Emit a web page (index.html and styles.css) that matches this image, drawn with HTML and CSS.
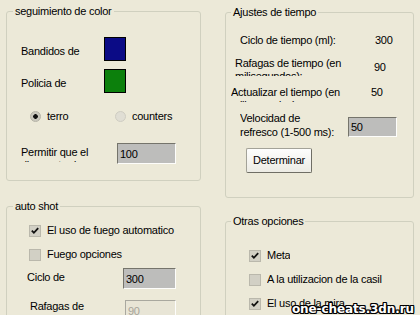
FILE: index.html
```html
<!DOCTYPE html>
<html lang="es">
<head>
  <meta charset="UTF-8" />
  <title>Opciones</title>
  <link rel="stylesheet" href="styles.css">
</head>
<body>
  <div class="col col-left">
    <fieldset class="group group-color">
      <legend>seguimiento de color</legend>
      <div class="swatch-row first">
        <span class="swatch-label">Bandidos de color</span>
        <span class="swatch blue"></span>
      </div>
      <div class="swatch-row">
        <span class="swatch-label">Policia de color</span>
        <span class="swatch green"></span>
      </div>
      <div class="radio-row">
        <label class="option"><span class="radio on"></span>terro</label>
        <label class="option"><span class="radio off"></span>counters</label>
      </div>
      <div class="field-row permit">
        <span class="field-label">Permitir que el disparo tarde:</span>
        <input class="field" type="text" value="100" readonly>
      </div>
    </fieldset>

    <fieldset class="group group-shot">
      <legend>auto shot</legend>
      <div class="check-row first">
        <span class="check on"><svg viewBox="0 0 12 12" width="12" height="12"><path d="M2.8 5.6l2.1 2.2 4.3-4.7" /></svg></span>
        El uso de fuego automatico
      </div>
      <div class="check-row">
        <span class="check"></span>
        Fuego opciones
      </div>
      <div class="field-row cycle">
        <span class="field-label">Ciclo de disparo:</span>
        <input class="field" type="text" value="300" readonly>
      </div>
      <div class="field-row burst">
        <span class="field-label">Rafagas de velocidad (ms):</span>
        <input class="field disabled" type="text" value="90" disabled>
      </div>
    </fieldset>
  </div>

  <div class="col col-right">
    <fieldset class="group group-time">
      <legend>Ajustes de tiempo</legend>
      <div class="trow t-cycle">
        <span class="tlabel">Ciclo de tiempo (ml):</span>
        <span class="tvalue">300</span>
      </div>
      <div class="trow t-burst">
        <span class="tlabel">Rafagas de tiempo (en milisegundos):</span>
        <span class="tvalue">90</span>
      </div>
      <div class="trow t-update">
        <span class="tlabel">Actualizar el tiempo (en milisegundos):</span>
        <span class="tvalue">50</span>
      </div>
      <div class="trow t-refresh">
        <span class="tlabel">Velocidad de<br>refresco (1-500 ms):</span>
        <input class="field" type="text" value="50" readonly>
      </div>
      <button class="btn" type="button">Determinar</button>
    </fieldset>

    <fieldset class="group group-other">
      <legend>Otras opciones</legend>
      <div class="check-row first">
        <span class="check on"><svg viewBox="0 0 12 12" width="12" height="12"><path d="M2.8 5.6l2.1 2.2 4.3-4.7" /></svg></span>
        <span class="check-text">Meta</span>
      </div>
      <div class="check-row">
        <span class="check"></span>
        <span class="check-text">A la utilizacion de la casilla</span>
      </div>
      <div class="check-row">
        <span class="check on"><svg viewBox="0 0 12 12" width="12" height="12"><path d="M2.8 5.6l2.1 2.2 4.3-4.7" /></svg></span>
        <span class="check-text">El uso de la mira</span>
      </div>
    </fieldset>
  </div>

  <div class="watermark">one-cheats.3dn.ru</div>
</body>
</html>
```

FILE: styles.css
```css
html {
  background: #ece9d8;
}

body {
  margin: 0;
  width: 420px;
  height: 315px;
  box-sizing: border-box;
  padding-left: 6px;
  overflow: hidden;
  position: relative;
  display: flex;
  gap: 24px;
  background: #ece9d8;
  color: #000;
  font-family: "Liberation Sans", Arial, sans-serif;
  font-size: 11px;
  line-height: 13px;
  letter-spacing: -0.25px;
}

.col {
  display: flex;
  flex-direction: column;
}

.col-left {
  width: 195px;
  padding-top: 4px;
}

.col-right {
  width: 189px;
  padding-top: 5px;
}

/* group boxes */
.group {
  flex-shrink: 0;
  margin: 0;
  padding: 0;
  min-width: 0;
  border: 1px solid #d0d0bf;
  border-radius: 3px;
}

.group legend {
  margin-left: 6px;
  padding: 0 2px;
  line-height: 14px;
}

.col-right .group legend {
  margin-left: 5px;
}

.group-color {
  padding-bottom: 16px;
}

.group-shot {
  margin-top: 18px;
}

.group-time {
  padding-bottom: 24px;
}

.group-other {
  margin-top: 16px;
  padding-bottom: 20px;
}

/* colour swatches */
.swatch-row {
  display: flex;
  align-items: flex-start;
  padding-left: 14px;
  margin-top: 8px;
}

.swatch-row.first {
  margin-top: 19px;
}

.swatch-label {
  width: 70px;
  height: 15px;
  margin-top: 8px;
  margin-right: 13px;
  overflow: hidden;
}

.swatch {
  width: 22px;
  height: 24px;
  box-sizing: border-box;
  border: 1px solid #000;
}

.swatch.blue {
  background: #0b0b86;
}

.swatch.green {
  background: #0c800c;
}

/* radios */
.radio-row {
  display: flex;
  margin-top: 17px;
  padding-left: 23px;
  height: 13px;
}

.option {
  display: flex;
  align-items: center;
  gap: 6px;
  width: 85px;
}

.radio {
  width: 11px;
  height: 11px;
  box-sizing: border-box;
  border-radius: 50%;
  border: 1px solid #b4b2a6;
}

.radio.on {
  background: radial-gradient(circle, #111 0 2px, #cac8bd 2.6px);
}

.radio.off {
  background: #e0ded4;
  border-color: #cfcdc2;
}

/* checkboxes */
.check-row {
  display: flex;
  align-items: center;
  gap: 6px;
  height: 13px;
  margin-top: 11px;
  padding-left: 22px;
}

.group-other .check-row {
  padding-left: 23px;
}

.group-other .check-row.first {
  margin-top: 21px;
}

.check-text {
  max-width: 115px;
  overflow: hidden;
  white-space: nowrap;
}

.check {
  flex-shrink: 0;
  width: 12px;
  height: 12px;
  box-sizing: border-box;
  border: 1px solid #bab8ac;
  background: #d2d0c5;
}

.check svg {
  display: block;
  margin: -1px;
}

.check path {
  fill: none;
  stroke: #111;
  stroke-width: 1.8;
}

/* edit fields */
.field-row {
  display: flex;
  align-items: flex-start;
}

.field-label {
  height: 16px;
  margin-top: 3px;
  overflow: hidden;
}

.field {
  box-sizing: border-box;
  height: 21px;
  margin: 0;
  padding: 0 2px;
  border: 1px solid;
  border-color: #75746b #fdfdfb #fdfdfb #75746b;
  background: #bdbdbb;
  color: #000;
  font: inherit;
  letter-spacing: inherit;
  outline: none;
}

.field.disabled {
  background: #e8e5d6;
  border-color: #a9a89f #fdfdfb #fdfdfb #a9a89f;
  color: #a6a49a;
}

.permit {
  margin-top: 20px;
  padding-left: 14px;
}

.permit .field-label {
  width: 96px;
}

.permit .field {
  width: 59px;
}

.cycle {
  margin-top: 7px;
  padding-left: 20px;
}

.cycle .field-label {
  width: 60px;
  height: 14px;
  margin-right: 36px;
}

.cycle .field {
  width: 53px;
}

.burst {
  margin-top: 11px;
  padding-left: 23px;
}

.burst .field-label {
  width: 62px;
  height: 26px;
  margin-top: 0;
  margin-right: 33px;
}

.burst .field {
  width: 51px;
}

/* timing rows */
.trow {
  display: flex;
  align-items: flex-start;
}

.tlabel {
  overflow: hidden;
}

.t-cycle {
  margin-top: 15px;
  padding-left: 14px;
}

.t-cycle .tlabel {
  width: 135px;
  height: 13px;
}

.t-burst {
  margin-top: 10px;
  padding-left: 9px;
}

.t-burst .tlabel {
  width: 139px;
  height: 19px;
}

.t-burst .tvalue {
  margin-top: 4px;
}

.t-update {
  margin-top: 10px;
  padding-left: 5px;
}

.t-update .tlabel {
  width: 140px;
  height: 16px;
}

.t-refresh {
  margin-top: 9px;
  padding-left: 14px;
}

.t-refresh .tlabel {
  width: 96px;
  margin-right: 12px;
  line-height: 14px;
}

.t-refresh .field {
  width: 49px;
  height: 20px;
  margin-top: 6px;
}

.btn {
  display: block;
  width: 66px;
  height: 25px;
  margin: 9px 0 0 20px;
  padding: 0;
  border: 1px solid #a3a298;
  border-right-color: #6f6e65;
  border-bottom-color: #6f6e65;
  border-radius: 2px;
  background: linear-gradient(#fefefd, #ecebe4);
  color: #000;
  font: inherit;
  letter-spacing: inherit;
}

.watermark {
  position: absolute;
  right: 6px;
  bottom: -1px;
  font-family: "DejaVu Sans", sans-serif;
  font-weight: bold;
  font-size: 12px;
  line-height: 14px;
  letter-spacing: -0.1px;
  color: #fff;
  text-shadow: 1px 0 #000, -1px 0 #000, 0 1px #000, 0 -1px #000,
    1px 1px #000, -1px -1px #000, 1px -1px #000, -1px 1px #000;
}
```
